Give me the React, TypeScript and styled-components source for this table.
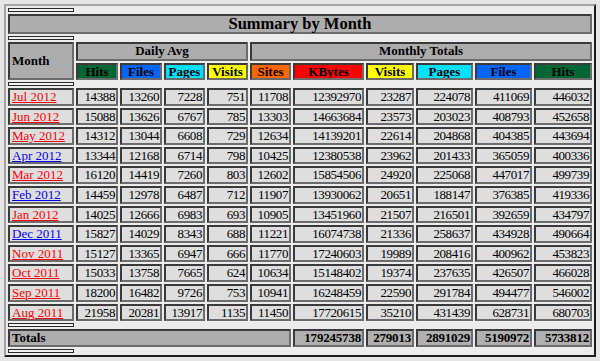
import React from 'react'
import styled, { createGlobalStyle } from 'styled-components'

const GlobalStyle = createGlobalStyle`
    body {
        margin: 0;
        background-color: #e6e6e6;
        font-family: "Liberation Serif", "Times New Roman", serif;
    }
`

const Page = styled.div`
    padding: 4px 0 0 4px;
`

const SummaryTable = styled.table`
    border-collapse: separate;
    border-spacing: 2px 2px;
    table-layout: fixed;
    width: 592px;
    border: 2px solid;
    border-color: #a4a4a4 #1c1c1c #1c1c1c #a4a4a4;
    background-color: #ececec;
    font-family: "Liberation Serif", "Times New Roman", serif;
    color: #000;
`

const Spacer = styled.th`
    height: 2px;
    padding: 0;
    font-size: 0;
    line-height: 0;
    border: 1px solid #2a2a2a;
    background-color: #f2f2f2;
`

const TitleCell = styled.th`
    padding: 0;
    line-height: 16px;
    font-size: 16.5px;
    font-weight: bold;
    text-align: center;
    background-color: #adadad;
    border: 2px solid;
    border-color: #3a3a3a #6c6c6c #6c6c6c #3a3a3a;
`

const HeadCell = styled.th<{ $bg?: string; $tall?: boolean }>`
    padding: 0 2px;
    line-height: ${({ $tall }) => ($tall ? '14.5px' : '13.5px')};
    font-size: 13px;
    font-weight: bold;
    color: #000;
    background-color: ${({ $bg }) => $bg || '#adadad'};
    border: 2px solid;
    border-color: #3a3a3a #6c6c6c #6c6c6c #3a3a3a;
    white-space: nowrap;
    overflow: hidden;
`

const MonthHead = styled(HeadCell)`
    text-align: left;
    vertical-align: middle;
`

const MonthCell = styled.td`
    padding: 0 2px;
    line-height: 13.6px;
    font-size: 13px;
    background-color: #dedede;
    border: 2px solid;
    border-color: #3a3a3a #6c6c6c #6c6c6c #3a3a3a;
    white-space: nowrap;
`

const MonthLink = styled.a<{ $visited?: boolean }>`
    color: ${({ $visited }) => ($visited ? '#0000ff' : '#ff0000')};
    text-decoration: underline;
`

const NumCell = styled.td<{ $total?: boolean }>`
    padding: 0 1px 0 0;
    line-height: 13.6px;
    font-size: 13px;
    font-weight: ${({ $total }) => ($total ? 'bold' : 'normal')};
    letter-spacing: ${({ $total }) => ($total ? '-0.2px' : '-0.4px')};
    text-align: right;
    background-color: ${({ $total }) => ($total ? '#b0b0b0' : '#dedede')};
    border: 2px solid;
    border-color: #3a3a3a #6c6c6c #6c6c6c #3a3a3a;
    white-space: nowrap;
`

const TotalLabel = styled.th`
    padding: 0 2px;
    line-height: 13.6px;
    font-size: 13px;
    font-weight: bold;
    text-align: left;
    background-color: #adadad;
    border: 2px solid;
    border-color: #3a3a3a #6c6c6c #6c6c6c #3a3a3a;
`

const colWidths = [66, 42, 42, 41, 41, 41, 71, 48, 57, 57, 58]

const months = [
    { m: 'Jul 2012', blue: false, d: [14388, 13260, 7228, 751], t: [11708, 12392970, 23287, 224078, 411069, 446032] },
    { m: 'Jun 2012', blue: false, d: [15088, 13626, 6767, 785], t: [13303, 14663684, 23573, 203023, 408793, 452658] },
    { m: 'May 2012', blue: false, d: [14312, 13044, 6608, 729], t: [12634, 14139201, 22614, 204868, 404385, 443694] },
    { m: 'Apr 2012', blue: true, d: [13344, 12168, 6714, 798], t: [10425, 12380538, 23962, 201433, 365059, 400336] },
    { m: 'Mar 2012', blue: false, d: [16120, 14419, 7260, 803], t: [12602, 15854506, 24920, 225068, 447017, 499739] },
    { m: 'Feb 2012', blue: true, d: [14459, 12978, 6487, 712], t: [11907, 13930062, 20651, 188147, 376385, 419336] },
    { m: 'Jan 2012', blue: false, d: [14025, 12666, 6983, 693], t: [10905, 13451960, 21507, 216501, 392659, 434797] },
    { m: 'Dec 2011', blue: true, d: [15827, 14029, 8343, 688], t: [11221, 16074738, 21336, 258637, 434928, 490664] },
    { m: 'Nov 2011', blue: false, d: [15127, 13365, 6947, 666], t: [11770, 17240603, 19989, 208416, 400962, 453823] },
    { m: 'Oct 2011', blue: false, d: [15033, 13758, 7665, 624], t: [10634, 15148402, 19374, 237635, 426507, 466028] },
    { m: 'Sep 2011', blue: false, d: [18200, 16482, 9726, 753], t: [10941, 16248459, 22590, 291784, 494477, 546002] },
    { m: 'Aug 2011', blue: false, d: [21958, 20281, 13917, 1135], t: [11450, 17720615, 35210, 431439, 628731, 680703] },
]

const totals = [179245738, 279013, 2891029, 5190972, 5733812]

const dailyHeads = [
    { label: 'Hits', bg: '#006633' },
    { label: 'Files', bg: '#0066ff' },
    { label: 'Pages', bg: '#00e0ff' },
    { label: 'Visits', bg: '#ffff00' },
]

const monthlyHeads = [
    { label: 'Sites', bg: '#ff6600' },
    { label: 'KBytes', bg: '#ff0000' },
    { label: 'Visits', bg: '#ffff00' },
    { label: 'Pages', bg: '#00e0ff' },
    { label: 'Files', bg: '#0066ff' },
    { label: 'Hits', bg: '#006633' },
]

const SpacerRow = () => (
    <tr>
        <Spacer />
    </tr>
)

const App: React.FunctionComponent = () => {
    return (
        <>
            <GlobalStyle />
            <Page>
                <SummaryTable>
                    <colgroup>
                        {colWidths.map((w, i) => (
                            <col key={i} style={{ width: w }} />
                        ))}
                    </colgroup>
                    <tbody>
                        <SpacerRow />
                        <tr>
                            <TitleCell colSpan={11}>Summary by Month</TitleCell>
                        </tr>
                        <SpacerRow />
                        <tr>
                            <MonthHead rowSpan={2}>Month</MonthHead>
                            <HeadCell $tall colSpan={4}>Daily Avg</HeadCell>
                            <HeadCell $tall colSpan={6}>Monthly Totals</HeadCell>
                        </tr>
                        <tr>
                            {dailyHeads.map((h, i) => (
                                <HeadCell key={'d' + i} $bg={h.bg}>{h.label}</HeadCell>
                            ))}
                            {monthlyHeads.map((h, i) => (
                                <HeadCell key={'m' + i} $bg={h.bg}>{h.label}</HeadCell>
                            ))}
                        </tr>
                        <SpacerRow />
                        {months.map((row) => (
                            <tr key={row.m}>
                                <MonthCell>
                                    <MonthLink href="#" $visited={row.blue}>{row.m}</MonthLink>
                                </MonthCell>
                                {row.d.map((v, i) => (
                                    <NumCell key={'d' + i}>{v}</NumCell>
                                ))}
                                {row.t.map((v, i) => (
                                    <NumCell key={'t' + i}>{v}</NumCell>
                                ))}
                            </tr>
                        ))}
                        <SpacerRow />
                        <tr>
                            <TotalLabel colSpan={6}>Totals</TotalLabel>
                            {totals.map((v, i) => (
                                <NumCell key={i} $total>{v}</NumCell>
                            ))}
                        </tr>
                        <SpacerRow />
                    </tbody>
                </SummaryTable>
            </Page>
        </>
    )
}

export default App
